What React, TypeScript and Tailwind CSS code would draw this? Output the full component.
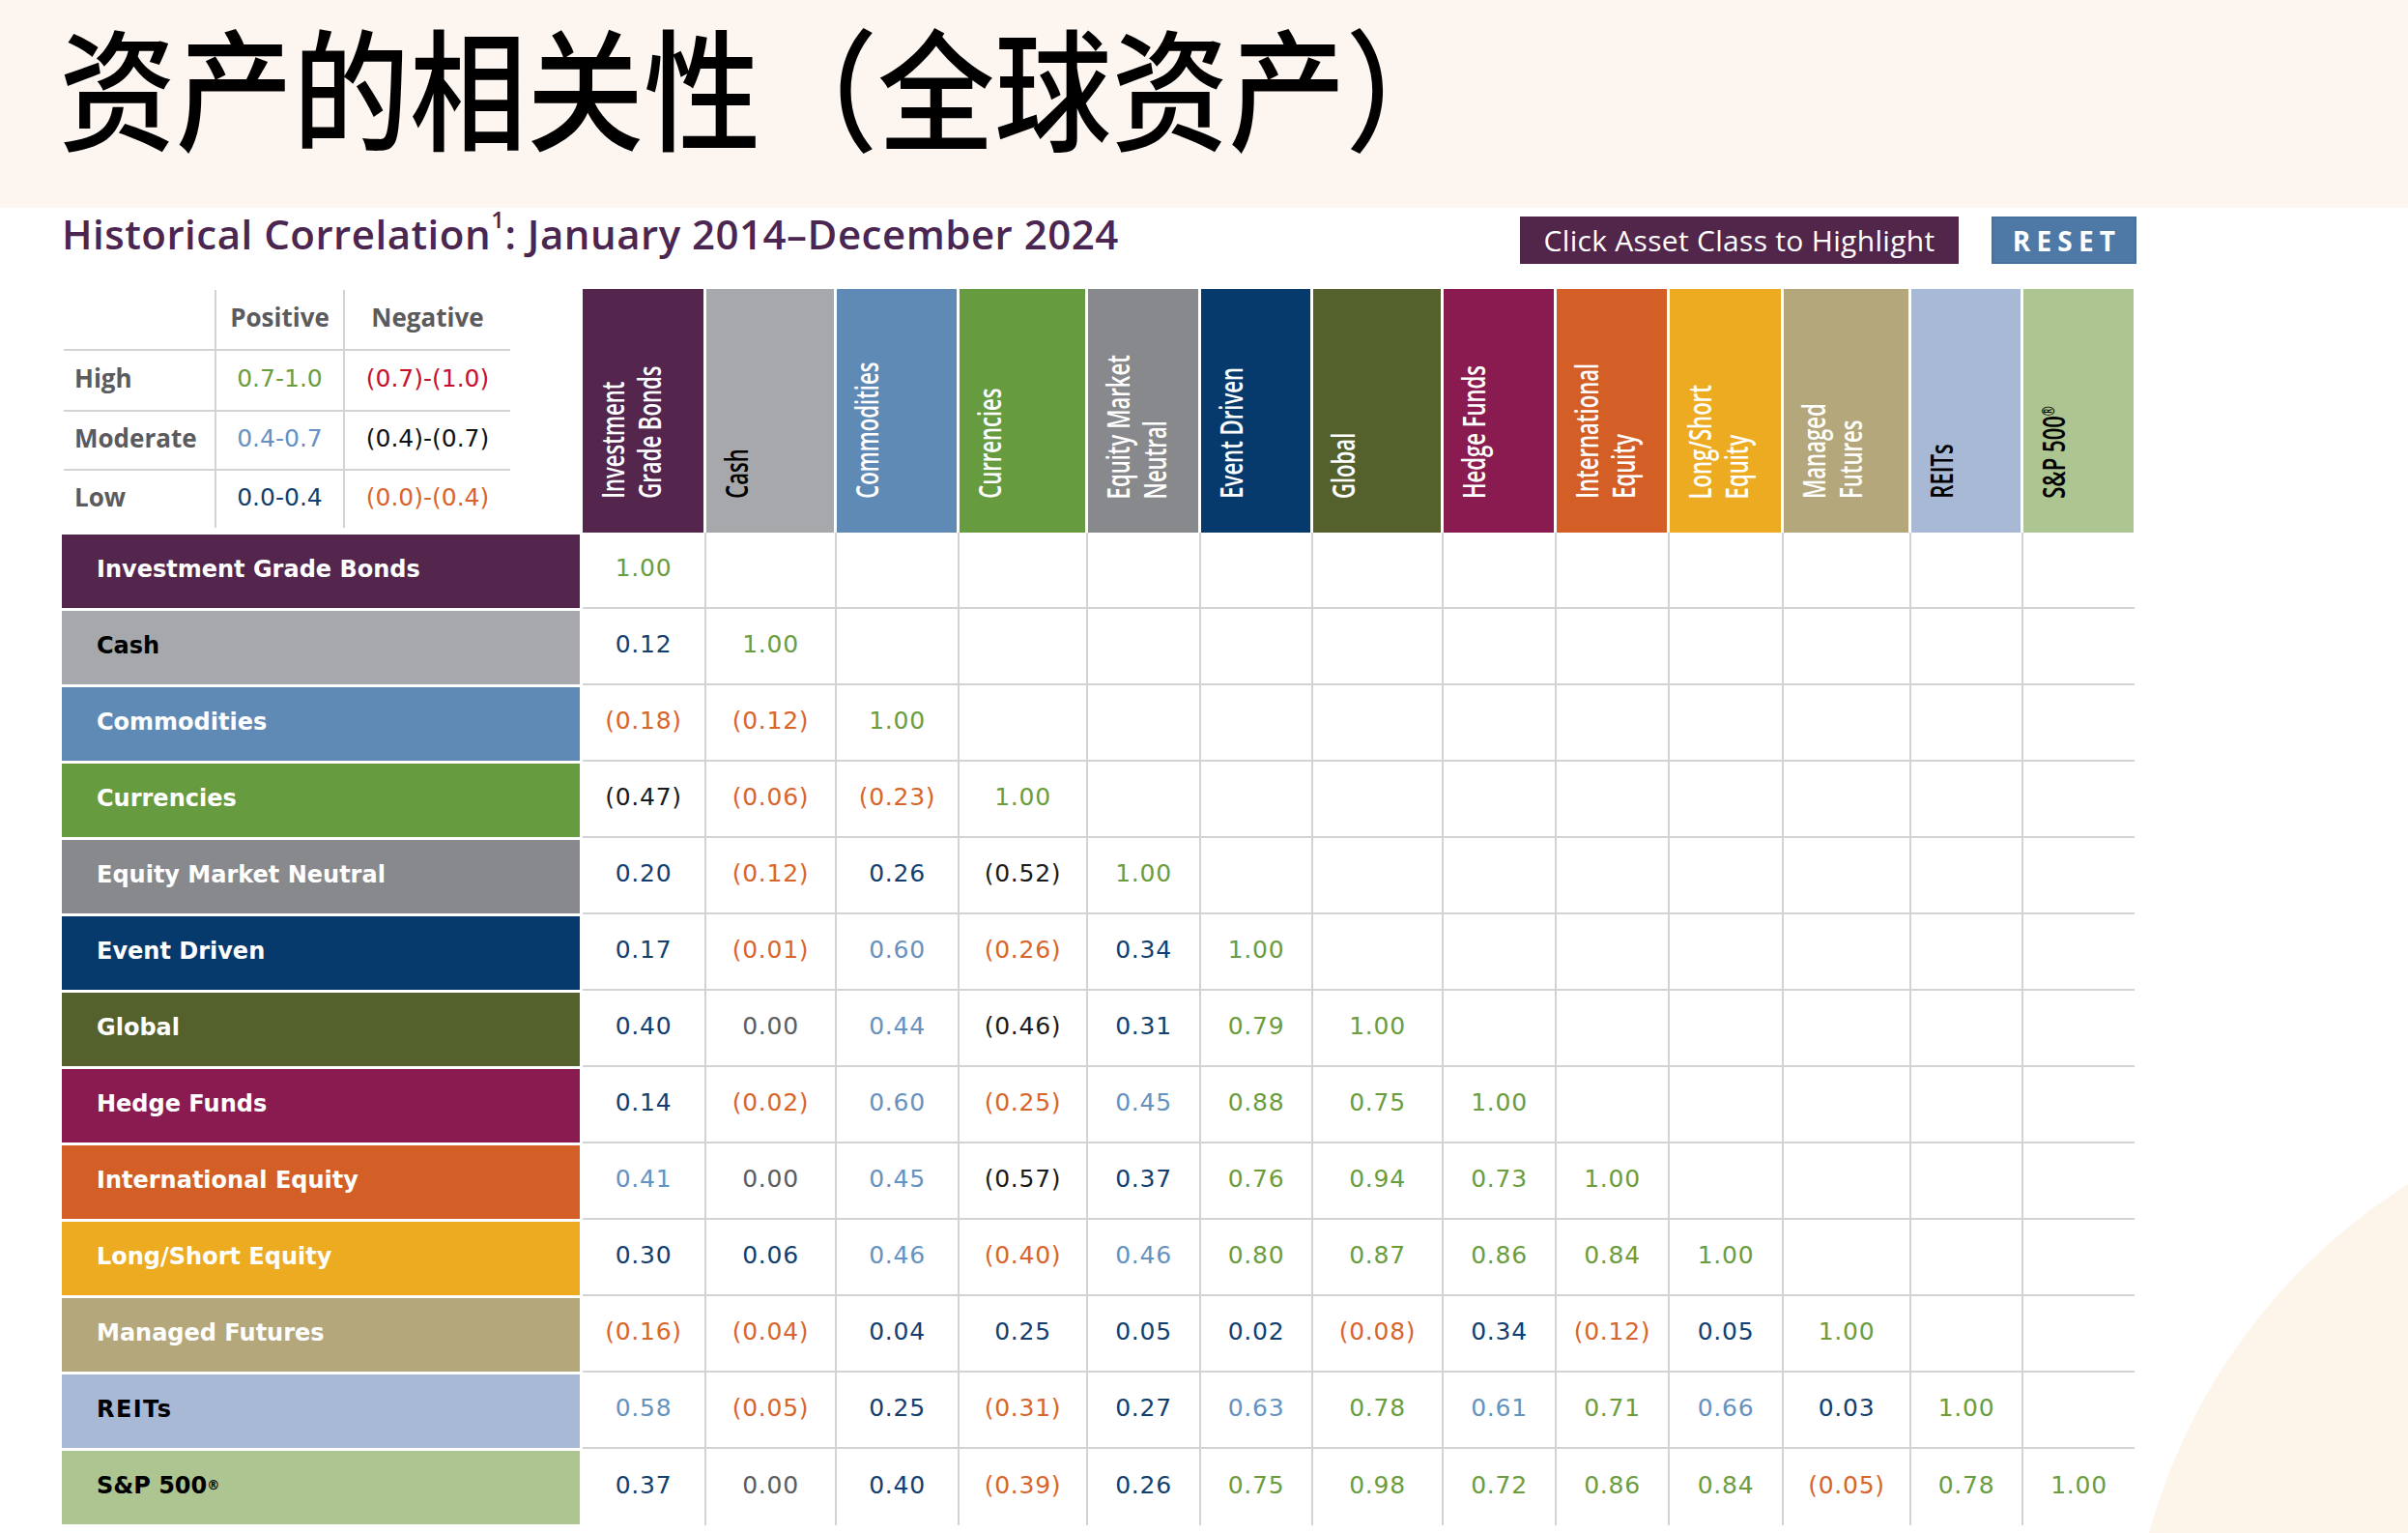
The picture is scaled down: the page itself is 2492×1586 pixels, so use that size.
import React from "react";

type Asset = {
  name: React.ReactNode;
  head: React.ReactNode;
  bg: string;
  dark: boolean;
};

const ASSETS: Asset[] = [
  { name: "Investment Grade Bonds", head: <>Investment<br />Grade Bonds</>, bg: "bg-[#54264e]", dark: false },
  { name: "Cash", head: "Cash", bg: "bg-[#a7a8ab]", dark: true },
  { name: "Commodities", head: "Commodities", bg: "bg-[#5f8ab6]", dark: false },
  { name: "Currencies", head: "Currencies", bg: "bg-[#679b3f]", dark: false },
  { name: "Equity Market Neutral", head: <>Equity Market<br />Neutral</>, bg: "bg-[#88898c]", dark: false },
  { name: "Event Driven", head: "Event Driven", bg: "bg-[#063a6d]", dark: false },
  { name: "Global", head: "Global", bg: "bg-[#55612d]", dark: false },
  { name: "Hedge Funds", head: "Hedge Funds", bg: "bg-[#8a1b51]", dark: false },
  { name: "International Equity", head: <>International<br />Equity</>, bg: "bg-[#d35f27]", dark: false },
  { name: "Long/Short Equity", head: <>Long/Short<br />Equity</>, bg: "bg-[#ecab21]", dark: false },
  { name: "Managed Futures", head: <>Managed<br />Futures</>, bg: "bg-[#b3a77b]", dark: false },
  { name: <span className="tracking-[0.06em]">REITs</span>, head: "REITs", bg: "bg-[#a7b9d4]", dark: true },
  {
    name: <>S&amp;P 500<span className="align-super text-[0.55em]">®</span></>,
    head: <>S&amp;P 500<span className="relative left-[11px] text-[0.55em]">®</span></>,
    bg: "bg-[#adc591]",
    dark: true,
  },
];

const WIDTHS = [128, 135, 127, 133, 117, 116, 135, 117, 117, 118, 132, 116, 115];

const DATA: number[][] = [
  [1.0],
  [0.12, 1.0],
  [-0.18, -0.12, 1.0],
  [-0.47, -0.06, -0.23, 1.0],
  [0.2, -0.12, 0.26, -0.52, 1.0],
  [0.17, -0.01, 0.6, -0.26, 0.34, 1.0],
  [0.4, 0.0, 0.44, -0.46, 0.31, 0.79, 1.0],
  [0.14, -0.02, 0.6, -0.25, 0.45, 0.88, 0.75, 1.0],
  [0.41, 0.0, 0.45, -0.57, 0.37, 0.76, 0.94, 0.73, 1.0],
  [0.3, 0.06, 0.46, -0.4, 0.46, 0.8, 0.87, 0.86, 0.84, 1.0],
  [-0.16, -0.04, 0.04, 0.25, 0.05, 0.02, -0.08, 0.34, -0.12, 0.05, 1.0],
  [0.58, -0.05, 0.25, -0.31, 0.27, 0.63, 0.78, 0.61, 0.71, 0.66, 0.03, 1.0],
  [0.37, 0.0, 0.4, -0.39, 0.26, 0.75, 0.98, 0.72, 0.86, 0.84, -0.05, 0.78, 1.0],
];

function valueColor(v: number): string {
  if (v === 0) return "text-[#5d5d5d]";
  if (v > 0) {
    if (v >= 0.7) return "text-[#6b9d3e]";
    if (v > 0.4) return "text-[#6592bf]";
    return "text-[#123f70]";
  }
  const a = -v;
  if (a >= 0.7) return "text-[#c8102e]";
  if (a > 0.4) return "text-[#1a1a1a]";
  return "text-[#d8652c]";
}

function fmt(v: number): string {
  return v < 0 ? `(${(-v).toFixed(2)})` : v.toFixed(2);
}

const GEO = { fontFamily: '"DejaVu Sans", "Liberation Sans", sans-serif' };
const HUM = { fontFamily: '"Open Sans", "Liberation Sans", sans-serif' };

function Legend() {
  const head = "flex items-center justify-center pb-[4px] text-[26px] font-bold text-[#5b5b5d]";
  const label = "flex items-center pb-[4px] pl-[11px] text-[26px] font-bold text-[#5b5b5d] border-t-2 border-[#d3d3d3]";
  const val = "flex items-center justify-center pb-[4px] text-[25px] border-t-2 border-l-2 border-[#d3d3d3]";
  return (
    <div
      className="grid grid-cols-[156px_133px_173px] grid-rows-[61px_63px_61px_61px] w-[462px]"
      style={HUM}
    >
      <div />
      <div className={`${head} border-l-2 border-[#d3d3d3]`}>Positive</div>
      <div className={`${head} border-l-2 border-[#d3d3d3]`}>Negative</div>

      <div className={label}>High</div>
      <div className={`${val} text-[#6b9d3e]`} style={GEO}>0.7-1.0</div>
      <div className={`${val} text-[#c8102e]`} style={GEO}>(0.7)-(1.0)</div>

      <div className={label}>Moderate</div>
      <div className={`${val} text-[#6592bf]`} style={GEO}>0.4-0.7</div>
      <div className={`${val} text-[#111111]`} style={GEO}>(0.4)-(0.7)</div>

      <div className={label}>Low</div>
      <div className={`${val} text-[#123f70]`} style={GEO}>0.0-0.4</div>
      <div className={`${val} text-[#d8652c]`} style={GEO}>(0.0)-(0.4)</div>
    </div>
  );
}

function HeaderCell({ asset, w, last }: { asset: Asset; w: number; last: boolean }) {
  return (
    <div className="flex-none h-full" style={{ width: w }}>
      <div
        className={`h-full flex items-end pl-[12px] pb-[35px] ${asset.bg} ${asset.dark ? "text-black" : "text-white"}`}
        style={{ width: last ? w - 1 : w - 3 }}
      >
        <div className="origin-bottom scale-y-[0.69]">
          <div
            className="[writing-mode:vertical-rl] [text-orientation:sideways] rotate-180 whitespace-nowrap text-[32px] leading-[38px] font-semibold"
            style={HUM}
          >
            {asset.head}
          </div>
        </div>
      </div>
    </div>
  );
}

export default function App() {
  return (
    <div className="relative w-[2492px] h-[1586px] overflow-hidden bg-white">
      <div className="absolute left-[2202px] top-[1130px] w-[1240px] h-[1240px] rounded-full bg-[#fdf4ea]" />

      <header className="relative h-[215px] bg-[#fdf5ef] pl-[61px] pt-[5px]">
        <h1
          className="inline-block origin-left scale-x-[0.89] text-[136px] leading-[1.2] font-medium text-black whitespace-nowrap"
          style={{ fontFamily: '"Noto Sans CJK SC", "Noto Sans", sans-serif' }}
        >
          资产的相关性（全球资产）
        </h1>
      </header>

      <main className="relative ml-[64px] w-[2147px]">
        <div className="flex items-start pt-[9px]">
          <h2
            className="mt-[-5px] text-[42px] leading-[1.1] font-semibold tracking-[0.012em] text-[#4a2650] whitespace-nowrap"
            style={HUM}
          >
            Historical Correlation<sup className="text-[24px] top-[-0.9em]">1</sup>: January 2014–December 2024
          </h2>
          <div className="ml-auto flex gap-[34px]" style={HUM}>
            <button className="w-[454px] h-[49px] bg-[#52254a] text-white text-[30px] tracking-[0.01em] flex items-center justify-center">
              Click Asset Class to Highlight
            </button>
            <button className="w-[150px] h-[49px] bg-[#4e79a6] border-2 border-[#44709d] text-white text-[28px] font-bold tracking-[0.22em] flex items-center justify-center pl-[6px]">
              RESET
            </button>
          </div>
        </div>

        <div className="mt-[26px]">
          <div className="flex h-[252px]">
            <div className="flex-none w-[539px] pl-[2px] pt-[1px]">
              <Legend />
            </div>
            {ASSETS.map((a, i) => (
              <HeaderCell key={i} asset={a} w={WIDTHS[i]} last={i === ASSETS.length - 1} />
            ))}
          </div>

          {ASSETS.map((a, r) => {
            const lastRow = r === ASSETS.length - 1;
            return (
              <div key={r} className="flex h-[79px]">
                <div className="flex-none w-[539px]">
                  <div
                    className={`mt-[2px] h-[76px] w-[536px] flex items-center pl-[36px] pb-[4px] text-[24px] font-bold ${a.bg} ${a.dark ? "text-black" : "text-white"}`}
                    style={GEO}
                  >
                    {a.name}
                  </div>
                </div>
                {WIDTHS.map((w, c) => {
                  const v = DATA[r][c];
                  const lastCol = c === WIDTHS.length - 1;
                  return (
                    <div
                      key={c}
                      className={`flex-none h-full flex items-center justify-center pb-[3px] border-[#d3d3d3] ${lastCol ? "" : "border-r-2"} ${lastRow ? "" : "border-b-2"}`}
                      style={{ width: w, ...GEO }}
                    >
                      {v !== undefined && (
                        <span className={`text-[25px] tracking-[0.03em] ${valueColor(v)}`}>{fmt(v)}</span>
                      )}
                    </div>
                  );
                })}
              </div>
            );
          })}
        </div>
      </main>
    </div>
  );
}
